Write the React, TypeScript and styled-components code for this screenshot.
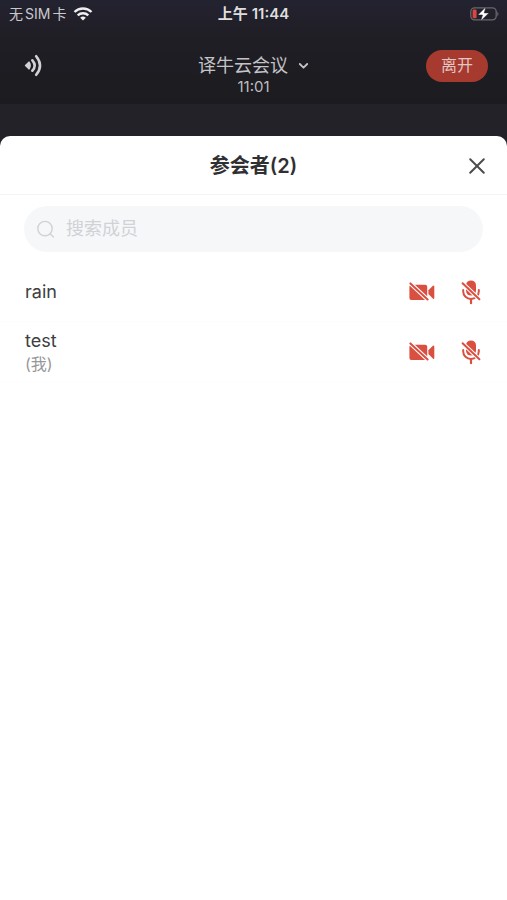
import React from "react";
import styled, { createGlobalStyle } from "styled-components";

const GlobalStyle = createGlobalStyle`
  * { box-sizing: border-box; }
  html, body { margin: 0; padding: 0; }
  body {
    background: #232228;
    font-family: Inter, "Noto Sans CJK SC", sans-serif;
  }
  button, input { font: inherit; }
`;

const Page = styled.div`
  min-height: 100vh;
  display: flex;
  flex-direction: column;
  background: #232228;
`;

const TopArea = styled.header`
  height: 104px;
  background: linear-gradient(#232230, #1f1e24 40%, #1c1b20);
  color: #c9c9cc;
`;

const StatusBar = styled.div`
  display: grid;
  grid-template-columns: 1fr auto 1fr;
  align-items: center;
  height: 28px;
  padding: 0 8px;
  font-size: 14px;
  line-height: 20px;
`;

const Carrier = styled.div`
  display: flex;
  align-items: center;
  gap: 2px;
  padding-left: 1px;
  color: #c9c9cc;

  svg { margin-left: 5px; }
`;

const Clock = styled.div`
  display: flex;
  gap: 4px;
  color: #dededf;
  font-size: 15px;
  font-weight: 600;
`;

const Battery = styled.div`
  display: flex;
  justify-content: flex-end;
`;

const MeetingBar = styled.div`
  display: grid;
  grid-template-columns: 1fr auto 1fr;
  align-items: center;
  height: 76px;
  padding: 0 19px;
`;

const IconButton = styled.button`
  display: flex;
  align-items: center;
  justify-content: center;
  justify-self: start;
  padding: 0;
  border: 0;
  background: none;
  color: inherit;
  cursor: pointer;
`;

const SpeakerButton = styled(IconButton)`
  padding-left: 4px;
`;

const MeetingInfo = styled.div`
  display: flex;
  flex-direction: column;
  align-items: center;
  padding-top: 17px;
`;

const MeetingName = styled.button`
  display: flex;
  align-items: center;
  gap: 10px;
  padding: 0;
  border: 0;
  background: none;
  color: #c4c4c8;
  font-size: 18px;
  line-height: 24px;
  cursor: pointer;
`;

const Duration = styled.div`
  font-size: 15px;
  line-height: 18px;
  color: #bcbcc0;
`;

const LeaveButton = styled.button`
  justify-self: end;
  width: 62px;
  height: 32px;
  padding: 0 0 2px;
  border: 0;
  border-radius: 16px;
  background: #a63a2f;
  color: #e3c5c3;
  font-size: 16px;
  line-height: 30px;
  cursor: pointer;
`;

const Sheet = styled.main`
  flex: 1;
  margin-top: 32px;
  border-radius: 10px 10px 0 0;
  background: #fff;
`;

const SheetHeader = styled.div`
  display: grid;
  grid-template-columns: 1fr auto 1fr;
  align-items: center;
  height: 59px;
  padding: 2px 20px 0;
  border-bottom: 1px solid #f5f5f6;

  ${IconButton} {
    grid-column: 3;
    justify-self: end;
    color: #4c4c4e;
  }
`;

const SheetTitle = styled.h1`
  grid-column: 2;
  margin: 0;
  color: #303032;
  font-size: 20px;
  font-weight: 600;
  line-height: 28px;
`;

const SearchBox = styled.label`
  display: flex;
  align-items: center;
  gap: 10px;
  height: 46px;
  margin: 11px 24px 10px;
  padding: 0 12px;
  border-radius: 23px;
  background: #f6f7f9;
  color: #d0d2d5;
`;

const SearchInput = styled.input`
  flex: 1;
  min-width: 0;
  height: 44px;
  padding: 0 0 2px;
  border: 0;
  outline: 0;
  background: transparent;
  color: #303032;
  font-size: 18px;

  &::placeholder { color: #d0d2d5; opacity: 1; }
`;

const MemberList = styled.ul`
  margin: 0;
  padding: 0;
  list-style: none;
`;

const MemberRow = styled.li`
  display: flex;
  align-items: center;
  justify-content: space-between;
  height: 60px;
  padding: 0 26px 0 25px;
  border-bottom: 1px solid #fdfdfd;
`;

const MemberName = styled.div`
  color: #3e3e40;
  font-size: 18px;
  line-height: 24px;
`;

const MemberNote = styled.div`
  color: #98989b;
  font-size: 16px;
  line-height: 22px;
`;

const DeviceButtons = styled.div`
  display: flex;
  align-items: center;
  gap: 26px;
  color: #d94f40;
`;

const WifiIcon = () => (
  <svg width="20" height="14" viewBox="0 0 20 14" fill="none" stroke="#eeeeef" strokeWidth="2.4" aria-hidden="true">
    <path d="M1.5 5a12.2 12.2 0 0 1 17 0M4.7 8.4a7.6 7.6 0 0 1 10.6 0" />
    <path d="M10 13.5 7.2 10.7a4.1 4.1 0 0 1 5.6 0z" fill="#eeeeef" stroke="none" />
  </svg>
);

const BatteryIcon = () => (
  <svg width="29" height="16" viewBox="0 0 29 16" role="img" aria-label="充电中">
    <rect x="0.8" y="1.8" width="25.4" height="12" rx="3.8" fill="none" stroke="#68686e" strokeWidth="1.3" />
    <path d="M27.3 5.5q2.4 2.4 0 4.8z" fill="#68686e" />
    <rect x="2.6" y="3.6" width="4" height="8.6" rx="1.2" fill="#d9463f" />
    <path d="M16 .8 7.8 9h4.7L10.7 15 19 6.9h-4.8z" fill="#fff" stroke="#1f1e24" strokeWidth=".5" />
  </svg>
);

const SpeakerIcon = () => (
  <svg width="20" height="24" viewBox="0 0 20 24" fill="none" stroke="#d2d2d5" strokeWidth="2.6" strokeLinecap="round" aria-hidden="true">
    <path d="M2.6 11.5 6 8.2q2.2 3.3 0 6.6z" fill="#d2d2d5" strokeWidth="1.6" strokeLinejoin="round" />
    <path d="M9.4 6.3q4.6 5.2 0 10.4M13.2 2.2q7.6 9.3 0 18.6" />
  </svg>
);

const ChevronIcon = () => (
  <svg width="11" height="8" viewBox="0 0 11 8" fill="none" stroke="currentColor" strokeWidth="1.8" strokeLinecap="round" strokeLinejoin="round" aria-hidden="true">
    <path d="m1.8 2 3.7 3.7L9.2 2" />
  </svg>
);

const CloseIcon = () => (
  <svg width="20" height="20" viewBox="0 0 20 20" fill="none" stroke="currentColor" strokeWidth="2" strokeLinecap="round" aria-hidden="true">
    <path d="m3.2 3.2 13.6 13.6M16.8 3.2 3.2 16.8" />
  </svg>
);

const SearchIcon = () => (
  <svg width="20" height="20" viewBox="0 0 20 20" fill="none" stroke="currentColor" strokeWidth="1.4" strokeLinecap="round" aria-hidden="true">
    <circle cx="9" cy="9.6" r="7.2" />
    <path d="m14.2 14.8 3.2 3.2" />
  </svg>
);

const CameraOffIcon = () => (
  <svg width="26" height="20" viewBox="0 0 26 20" aria-hidden="true">
    <rect x="0.4" y="2.7" width="17.8" height="15.2" rx="2" fill="currentColor" />
    <path d="m19.4 8.3 4.2-4.2q1.7-1.4 1.7.6v11q0 2-1.7.6l-4.2-4.2z" fill="currentColor" />
    <path d="m0 .1 21 19.6" stroke="#fff" strokeWidth="4.2" />
    <path d="m1.4 1.4 17.2 16.1" stroke="currentColor" strokeWidth="2" strokeLinecap="round" />
  </svg>
);

const MicOffIcon = () => (
  <svg width="20" height="26" viewBox="0 0 20 26" fill="none" aria-hidden="true">
    <rect x="5" y="1.4" width="10" height="15.2" rx="5" fill="currentColor" />
    <path d="M2.2 11v1.6a7.8 7.4 0 0 0 15.6 0V11" stroke="currentColor" strokeWidth="2" strokeLinecap="round" />
    <path d="M10 20.2v4" stroke="currentColor" strokeWidth="2.2" strokeLinecap="round" />
    <path d="m0 2.8 20 19" stroke="#fff" strokeWidth="4" />
    <path d="m1.6 4.2 16.8 16" stroke="currentColor" strokeWidth="2" strokeLinecap="round" />
  </svg>
);

const members = [
  { name: "rain", note: "" },
  { name: "test", note: "(我)" },
];

export default function App() {
  return (
    <Page>
      <GlobalStyle />
      <TopArea>
        <StatusBar>
          <Carrier>
            <span>无</span>
            <span>SIM</span>
            <span>卡</span>
            <WifiIcon />
          </Carrier>
          <Clock>
            <span>上午</span>
            <span>11:44</span>
          </Clock>
          <Battery>
            <BatteryIcon />
          </Battery>
        </StatusBar>
        <MeetingBar>
          <SpeakerButton type="button" aria-label="扬声器">
            <SpeakerIcon />
          </SpeakerButton>
          <MeetingInfo>
            <MeetingName type="button">
              译牛云会议
              <ChevronIcon />
            </MeetingName>
            <Duration>11:01</Duration>
          </MeetingInfo>
          <LeaveButton type="button">离开</LeaveButton>
        </MeetingBar>
      </TopArea>
      <Sheet>
        <SheetHeader>
          <SheetTitle>参会者(2)</SheetTitle>
          <IconButton type="button" aria-label="关闭">
            <CloseIcon />
          </IconButton>
        </SheetHeader>
        <SearchBox>
          <SearchIcon />
          <SearchInput type="text" placeholder="搜索成员" aria-label="搜索成员" />
        </SearchBox>
        <MemberList>
          {members.map((member) => (
            <MemberRow key={member.name}>
              <div>
                <MemberName>{member.name}</MemberName>
                {member.note && <MemberNote>{member.note}</MemberNote>}
              </div>
              <DeviceButtons>
                <IconButton type="button" aria-label={`${member.name} 摄像头已关闭`}>
                  <CameraOffIcon />
                </IconButton>
                <IconButton type="button" aria-label={`${member.name} 麦克风已静音`}>
                  <MicOffIcon />
                </IconButton>
              </DeviceButtons>
            </MemberRow>
          ))}
        </MemberList>
      </Sheet>
    </Page>
  );
}
